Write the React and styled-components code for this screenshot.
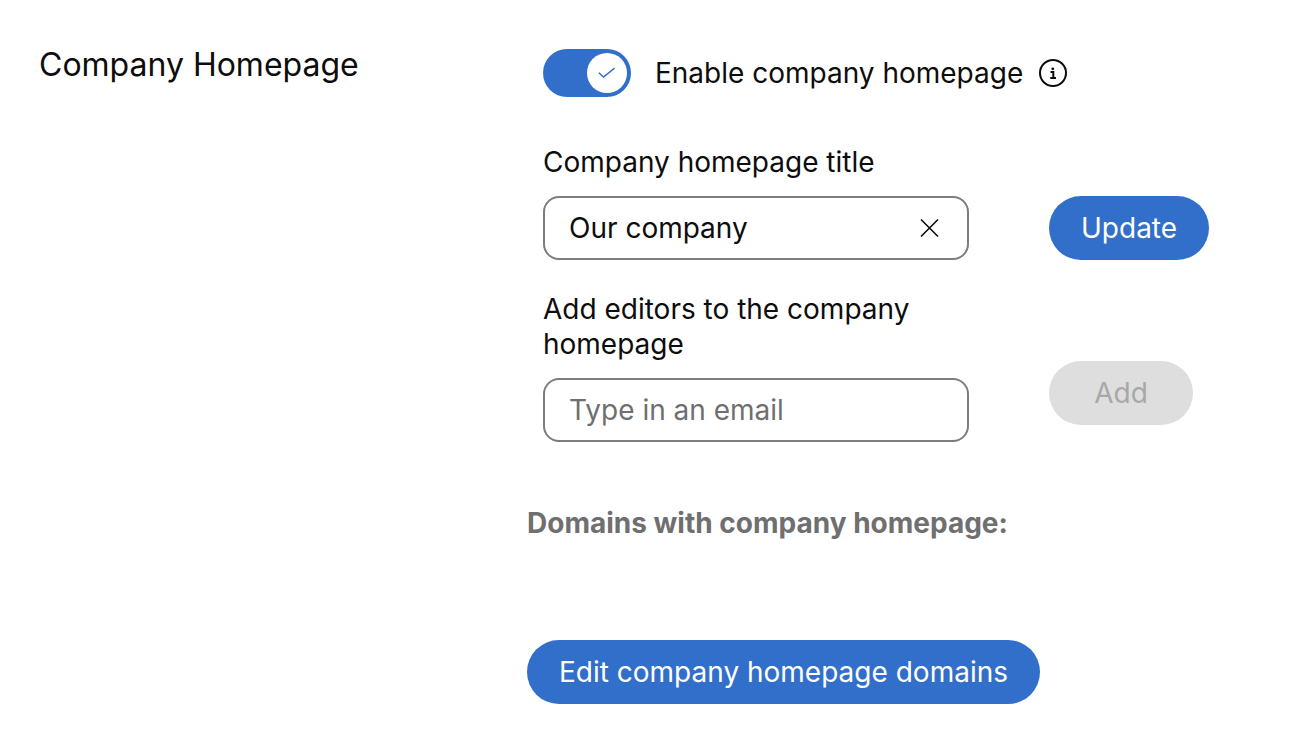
import { useState } from "react";
import styled, { createGlobalStyle } from "styled-components";

const App = () => {
	const [enabled, setEnabled] = useState(true);
	const [title, setTitle] = useState("Our company");
	const [email, setEmail] = useState("");

	return (
		<>
			<GlobalStyle />
			<Section>
				<Heading>Company Homepage</Heading>
				<Settings>
					<ToggleRow>
						<Toggle>
							<input
								id="enable"
								type="checkbox"
								checked={enabled}
								onChange={() => setEnabled(!enabled)}
							/>
							<Knob>
								<svg width="20" height="20" viewBox="0 0 20 20">
									<path d="M1.8 9.8l4.7 4.2L17.6 5.2" />
								</svg>
							</Knob>
						</Toggle>
						<label htmlFor="enable">Enable company homepage</label>
						<InfoButton type="button" aria-label="More information">
							<svg width="28" height="28" viewBox="0 0 28 28">
								<circle cx="14" cy="14" r="13" />
								<path d="M11.5 13h2.8v6M11.2 19h5.8" />
								<circle className="dot" cx="13.8" cy="9.8" r="1.4" />
							</svg>
						</InfoButton>
					</ToggleRow>

					<FieldRow>
						<Field>
							<label htmlFor="title">Company homepage title</label>
							<InputBox>
								<input
									id="title"
									value={title}
									onChange={(e) => setTitle(e.target.value)}
								/>
								<ClearButton
									type="button"
									aria-label="Clear"
									onClick={() => setTitle("")}
								>
									<svg width="20" height="20" viewBox="0 0 20 20">
										<path d="M2 1.5l17 17M19 1.5l-17 17" />
									</svg>
								</ClearButton>
							</InputBox>
						</Field>
						<Button type="button">Update</Button>
					</FieldRow>

					<FieldRow $raised>
						<Field>
							<label htmlFor="email">Add editors to the company homepage</label>
							<InputBox>
								<input
									id="email"
									type="email"
									placeholder="Type in an email"
									value={email}
									onChange={(e) => setEmail(e.target.value)}
								/>
							</InputBox>
						</Field>
						<Button type="button" disabled={!email}>
							Add
						</Button>
					</FieldRow>

					<Domains>
						<h2>Domains with company homepage:</h2>
						<Button type="button">Edit company homepage domains</Button>
					</Domains>
				</Settings>
			</Section>
		</>
	);
};

export default App;

const GlobalStyle = createGlobalStyle`
	* {
		box-sizing: border-box;
	}
	body {
		margin: 0;
		background: #fff;
		color: #0d0d0d;
		font-family: Inter, sans-serif;
		font-size: 28px;
		line-height: 35px;
	}
	button,
	input {
		font: inherit;
	}
`;

const Section = styled.main`
	display: grid;
	grid-template-columns: 504px minmax(0, 1fr);
	padding: 44px 39px;
`;

const Heading = styled.h1`
	margin: 0;
	font-size: 32px;
	line-height: 42px;
	font-weight: 400;
`;

const Settings = styled.div`
	display: flex;
	flex-direction: column;
`;

const ToggleRow = styled.div`
	display: flex;
	align-items: center;
	padding-top: 5px;
	margin-bottom: 48px;
`;

const Knob = styled.span`
	display: flex;
	align-items: center;
	justify-content: center;
	width: 40px;
	height: 40px;
	border-radius: 50%;
	background: #fff;
	pointer-events: none;
	svg {
		fill: none;
		stroke: #326fca;
		stroke-width: 1.5;
	}
`;

const Toggle = styled.span`
	position: relative;
	display: flex;
	justify-content: flex-start;
	width: 88px;
	height: 48px;
	margin-right: 24px;
	padding: 4px;
	border-radius: 24px;
	background: #767676;
	&:has(input:checked) {
		justify-content: flex-end;
		background: #326fca;
	}
	input {
		position: absolute;
		inset: 0;
		width: 100%;
		height: 100%;
		margin: 0;
		opacity: 0;
		cursor: pointer;
	}
`;

const InfoButton = styled.button`
	display: flex;
	margin-left: 16px;
	padding: 0;
	border: 0;
	background: none;
	svg {
		fill: none;
		stroke: #0d0d0d;
		stroke-width: 2;
	}
	.dot {
		fill: #0d0d0d;
		stroke: none;
	}
`;

const FieldRow = styled.div`
	display: flex;
	align-items: flex-end;
	gap: 80px;
	margin-bottom: 32px;
	> button {
		margin-bottom: ${({ $raised }) => ($raised ? "17px" : "0")};
	}
`;

const Field = styled.div`
	display: flex;
	flex-direction: column;
	gap: 16px;
	width: 426px;
`;

const InputBox = styled.div`
	display: flex;
	align-items: center;
	height: 64px;
	padding: 0 28px 0 24px;
	border: 2px solid #7d7d7d;
	border-radius: 16px;
	input {
		flex: 1;
		min-width: 0;
		padding: 0;
		border: 0;
		outline: 0;
		background: none;
		color: #0d0d0d;
	}
	input::placeholder {
		color: #6f6f6f;
		opacity: 1;
	}
`;

const ClearButton = styled.button`
	display: flex;
	padding: 0;
	border: 0;
	background: none;
	svg {
		fill: none;
		stroke: #0d0d0d;
		stroke-width: 1.6;
	}
`;

const Button = styled.button`
	min-width: 144px;
	height: 64px;
	padding: 0 32px;
	border: 0;
	border-radius: 32px;
	background: #326fca;
	color: #fff;
	white-space: nowrap;
	&:disabled {
		background: #dedede;
		color: #a8a8a8;
	}
`;

const Domains = styled.section`
	margin: 32px 0 0 -16px;
	h2 {
		margin: 0 0 99px;
		color: #6f6f6f;
		font-size: 28px;
		line-height: 35px;
		font-weight: 700;
	}
`;
